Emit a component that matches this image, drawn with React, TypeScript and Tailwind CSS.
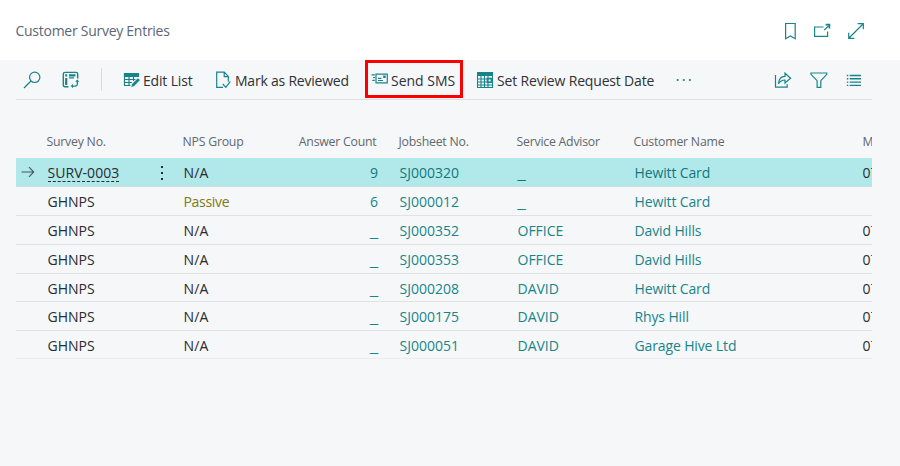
import React from "react";

type IconProps = { children: React.ReactNode; className?: string; box?: string };

function Icon({ children, className = "w-[18px] h-[18px]", box = "0 0 18 18" }: IconProps) {
  return (
    <svg viewBox={box} className={`${className} shrink-0`} fill="none" stroke="#16858a" strokeWidth="1.2">
      {children}
    </svg>
  );
}

const rows = [
  { h: "h-[29px]", no: "SURV-0003", group: "N/A", count: "9", job: "SJ000320", advisor: "_", name: "Hewitt Card", mobile: "07" },
  { h: "h-[29px]", no: "GHNPS", group: "Passive", count: "6", job: "SJ000012", advisor: "_", name: "Hewitt Card", mobile: "" },
  { h: "h-[29px]", no: "GHNPS", group: "N/A", count: "_", job: "SJ000352", advisor: "OFFICE", name: "David Hills", mobile: "07" },
  { h: "h-[29px]", no: "GHNPS", group: "N/A", count: "_", job: "SJ000353", advisor: "OFFICE", name: "David Hills", mobile: "07" },
  { h: "h-[28px]", no: "GHNPS", group: "N/A", count: "_", job: "SJ000208", advisor: "DAVID", name: "Hewitt Card", mobile: "07" },
  { h: "h-[29px]", no: "GHNPS", group: "N/A", count: "_", job: "SJ000175", advisor: "DAVID", name: "Rhys Hill", mobile: "07" },
  { h: "h-[28px]", no: "GHNPS", group: "N/A", count: "_", job: "SJ000051", advisor: "DAVID", name: "Garage Hive Ltd", mobile: "07" },
];

const columns = "grid grid-cols-[30.5px_136px_115px_81px_118px_117px_229px_30px]";

function Blank() {
  return <span className="font-['Liberation_Sans',sans-serif] text-[14.5px]">_</span>;
}

function Header() {
  return (
    <header className="flex h-[60px] items-center bg-white pl-[15.5px] pr-[35.5px] pt-px">
      <h1 className="text-[14px] tracking-[-0.27px] text-[#5c6675]">Customer Survey Entries</h1>
      <div className="ml-auto flex items-center">
        <Icon>
          <path d="M4.6 1.5h9.6v15.2l-4.8-2.8-4.8 2.8z" />
        </Icon>
        <Icon className="ml-[14px] h-[18px] w-[18px]">
          <path d="M10.5 5H1.6v9.4h13V9.5M11.3 8l4.4-4.4" />
          <path d="M12.6 2.7h3.8v3.7" strokeWidth="1.7" />
        </Icon>
        <Icon className="ml-[16px] h-[18px] w-[18px]">
          <path d="M2 16 16 2M10.7 1.7h5.6v5.6M1.7 10.7v5.6h5.6" />
        </Icon>
      </div>
    </header>
  );
}

function Toolbar() {
  return (
    <div className="ml-[16px] flex h-[40px] w-[856px] items-center border-b border-[#dddfe1] text-[14px] tracking-[-0.17px] text-[#2f3135]">
      <Icon className="ml-[7px] h-[18px] w-[18px]">
        <circle cx="11.7" cy="6.3" r="5.2" />
        <path d="M8 10 1 17" />
      </Icon>
      <Icon className="ml-[21px] h-[18px] w-[18px]">
        <path d="M6.5 15.8H3q-1.7 0-1.7-1.7V3Q1.3 1.4 3 1.4h11q1.7 0 1.7 1.6v4.5" strokeWidth="1.4" />
        <path d="M3.2 4.3h2M7 4.3h6.5M4.2 7v7" strokeWidth="2.2" />
        <path d="M7 6.9h5M15.3 9.5v3.8q0 1.8-1.8 1.8H10" strokeWidth="1.3" />
        <path d="m13.3 10.8 2-2.2 2 2.2zM11 13v4.2l-2.3-2.1z" fill="#16858a" stroke="none" />
      </Icon>
      <div className="ml-[21px] h-[23px] w-px bg-[#d9dcdf]" />
      <Icon className="ml-[21px] h-[18px] w-[18px]">
        <path d="M1.5 2.5h14v3h-14z" fill="#16858a" />
        <path d="M1.5 5v9.5h6M1.5 8.5h11M1.5 11.5H9M6 5v9.5M10.5 5v5" />
        <path d="m8 16.3.8-3.2 6-6.2 2.4 2.2-6 6.2z" fill="#16858a" stroke="#f6f7f9" strokeWidth=".5" />
      </Icon>
      <span className="ml-[2px] w-[50px] whitespace-nowrap pt-[2px]">Edit List</span>
      <Icon className="ml-[22px] h-[18px] w-[18px]">
        <path d="M8 16.3H1.7V1.2h7.6l4 4.2v5M9.2 1.5v4.2h4M7.8 13l3 3.3 4.5-6" />
      </Icon>
      <span className="ml-[2px] w-[115px] whitespace-nowrap pt-[2px] tracking-[-0.22px]">Mark as Reviewed</span>
      <div className="ml-[15px] flex h-[38px] w-[98px] shrink-0 items-center self-start border-[3px] border-[#fa0000] pl-[3px]">
        <Icon>
          <path d="M5 4.1h11.3v8.7H5zM.5 4.8h3.3M2 7.5h2M1.3 10.3h2.5M7 8.3h3.5M7 10.5h5M12.8 6h1.3v1.3h-1.3z" />
        </Icon>
        <span className="ml-[2px] whitespace-nowrap pt-[2px] tracking-[0px]">Send SMS</span>
      </div>
      <Icon className="ml-[13px] h-[18px] w-[18px]">
        <path d="M1 1h16v4H1z" fill="#16858a" stroke="none" />
        <path d="M1.5 5v11.5h15V5M5 5v11.5M8.5 5v11.5M12 5v11.5M1.5 8h15M1.5 11h15M1.5 14h15" strokeWidth="1.1" />
        <path d="M11.3 7.3h4v4h-4z" />
      </Icon>
      <span className="ml-[3px] w-[158px] whitespace-nowrap pt-[2px]">Set Review Request Date</span>
      <Icon className="ml-[20px] h-[18px] w-[18px]">
        <g fill="#16858a" stroke="none">
          <circle cx="2.7" cy="9" r="1.1" />
          <circle cx="8.8" cy="9" r="1.1" />
          <circle cx="14.9" cy="9" r="1.1" />
        </g>
      </Icon>
      <div className="ml-auto flex items-center pr-[9px]">
        <Icon>
          <path d="M1.5 4v12.2h11.7v-3" />
          <path d="M4.5 12.8C4.8 8 7.4 5.4 11 5.4V2.2l5.6 5-5.6 4.8V9C8 9 6.2 10 4.5 12.8Z" />
        </Icon>
        <Icon className="ml-[18px] h-[18px] w-[18px]">
          <path d="M1 2h15.8v1.3l-6 6.4v6.6H7.1V9.7L1 3.3z" />
        </Icon>
        <Icon className="ml-[17px] h-[18px] w-[18px]">
          <path d="M1.8 4.5h1.5M4.7 4.5H16M1.8 7.8h1.5M4.7 7.8H16M1.8 11.1h1.5M4.7 11.1H16M1.8 14.4h1.5M4.7 14.4H16" strokeWidth="1.4" />
        </Icon>
      </div>
    </div>
  );
}

function Survey() {
  return (
    <section className="ml-[16px] w-[856px] overflow-hidden">
      <div className={`${columns} h-[58px] items-end whitespace-nowrap pb-[7px] text-[12.3px] leading-[18px] tracking-[-0.23px] text-[#61686c]`}>
        <span />
        <span>Survey No.</span>
        <span>NPS Group</span>
        <span className="pr-[2px] text-right">Answer Count</span>
        <span className="pl-[20px]">Jobsheet No.</span>
        <span className="pl-[20px]">Service Advisor</span>
        <span className="pl-[20px]">Customer Name</span>
        <span className="pl-[20px]">M</span>
      </div>
      {rows.map((row, i) => (
        <div
          key={row.job}
          className={`${columns} ${row.h} items-center whitespace-nowrap border-b pt-[2px] text-[14px] leading-[20px] ${
            i === 0 ? "border-[#cfdfe1] bg-[#b1e9eb] text-[#12777c]" : i === 6 ? "border-[#eaecee] text-[#16858a]" : "border-[#e0e2e4] text-[#16858a]"
          }`}
        >
          <span>
            {i === 0 && (
              <Icon className="mb-[2px] ml-[5px] h-[14px] w-[14px]" box="0 0 14 14">
                <path d="M.5 7h12M8 2.2 12.7 7 8 11.8" stroke="#41595c" strokeWidth="1.1" />
              </Icon>
            )}
          </span>
          <span className="flex items-center pl-px text-[#292b2d]">
            <span className={i === 0 ? "h-[18px] border-b-[1.5px] border-dashed border-[#292b2d] leading-[18px] tracking-[0.05px]" : ""}>{row.no}</span>
            {i === 0 && (
              <svg viewBox="0 0 4 16" className="ml-auto mr-[19px] h-4 w-1" fill="#292b2d">
                <path d="M1 1h2v2H1zM1 7h2v2H1zM1 13h2v2H1z" />
              </svg>
            )}
          </span>
          <span className={`pl-px ${row.group === "Passive" ? "tracking-[-0.3px] text-[#7d7a12]" : "tracking-[0.2px] text-[#292b2d]"}`}>{row.group}</span>
          <span className="pr-[0.5px] text-right">{row.count === "_" ? <Blank /> : row.count}</span>
          <span className="pl-[21px]">{row.job}</span>
          <span className="pl-[21px]">{row.advisor === "_" ? <Blank /> : row.advisor}</span>
          <span className="pl-[21px] tracking-[-0.13px]">{row.name}</span>
          <span className="pl-[20px] text-[#292b2d]">{row.mobile}</span>
        </div>
      ))}
    </section>
  );
}

export default function App() {
  return (
    <main className="h-[466px] w-[900px] overflow-hidden bg-[#f6f7f9] font-['Open_Sans','Noto_Sans',sans-serif]">
      <Header />
      <Toolbar />
      <Survey />
    </main>
  );
}
